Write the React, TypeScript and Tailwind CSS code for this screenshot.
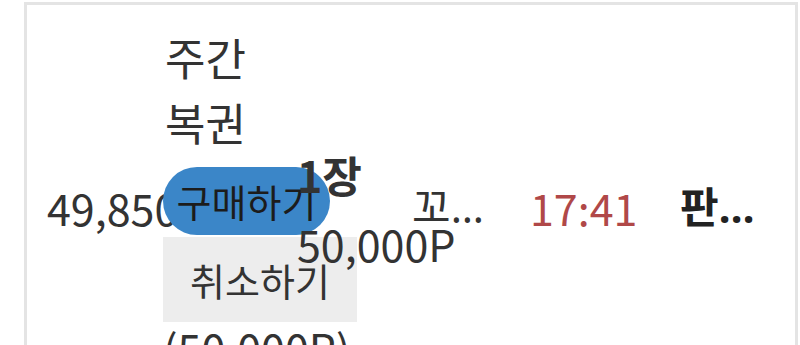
import React from "react";

const App = () => {
  return (
    <div className="w-[800px] h-[345px] overflow-hidden bg-white font-['Noto_Sans_CJK_KR','Noto_Sans',sans-serif] text-[#333]">
      <div className="ml-[24px] mt-[2px] w-[774px] h-[440px] border-[3px] border-[#e4e4e4]">
        <div className="flex items-center h-[404px]">
          <div className="w-[136px] shrink-0 pl-[20px] text-[43px] leading-[60px] whitespace-nowrap">
            49,850
          </div>
          <div className="w-[134px] shrink-0 self-start mt-[20px] flex flex-col">
            <p className="pl-[2px] text-[44px] leading-[65px] break-keep">주간 복권</p>
            <button className="relative mt-[12px] w-[167px] h-[68px] rounded-full bg-[#3b86c8] text-[38px] text-[#1c1c1c] leading-none">
              구매하기
            </button>
            <button className="mt-[2px] w-[194px] h-[85px] bg-[#ededed] text-[38px] text-[#333] leading-none">
              취소하기
            </button>
            <p className="mt-[4px] text-[43px] leading-[42px] whitespace-nowrap">(50,000P)</p>
          </div>
          <div className="relative w-[115px] shrink-0 flex flex-col mt-[4px] text-[43px] leading-[69px] whitespace-nowrap">
            <span className="font-bold">1장</span>
            <span>50,000P</span>
          </div>
          <div className="w-[118px] shrink-0 text-[42px] leading-[60px] font-['Noto_Sans','Noto_Sans_CJK_KR',sans-serif]">
            <p className="w-[76px] truncate">꼬마복권</p>
          </div>
          <div className="w-[150px] shrink-0 text-[43px] leading-[60px] text-[#b04848]">
            17:41
          </div>
          <div className="shrink-0 text-[42px] leading-[60px] font-bold text-[#222] font-['Noto_Sans','Noto_Sans_CJK_KR',sans-serif]">
            <p className="w-[76px] truncate">판매중</p>
          </div>
        </div>
      </div>
    </div>
  );
};

export default App;
